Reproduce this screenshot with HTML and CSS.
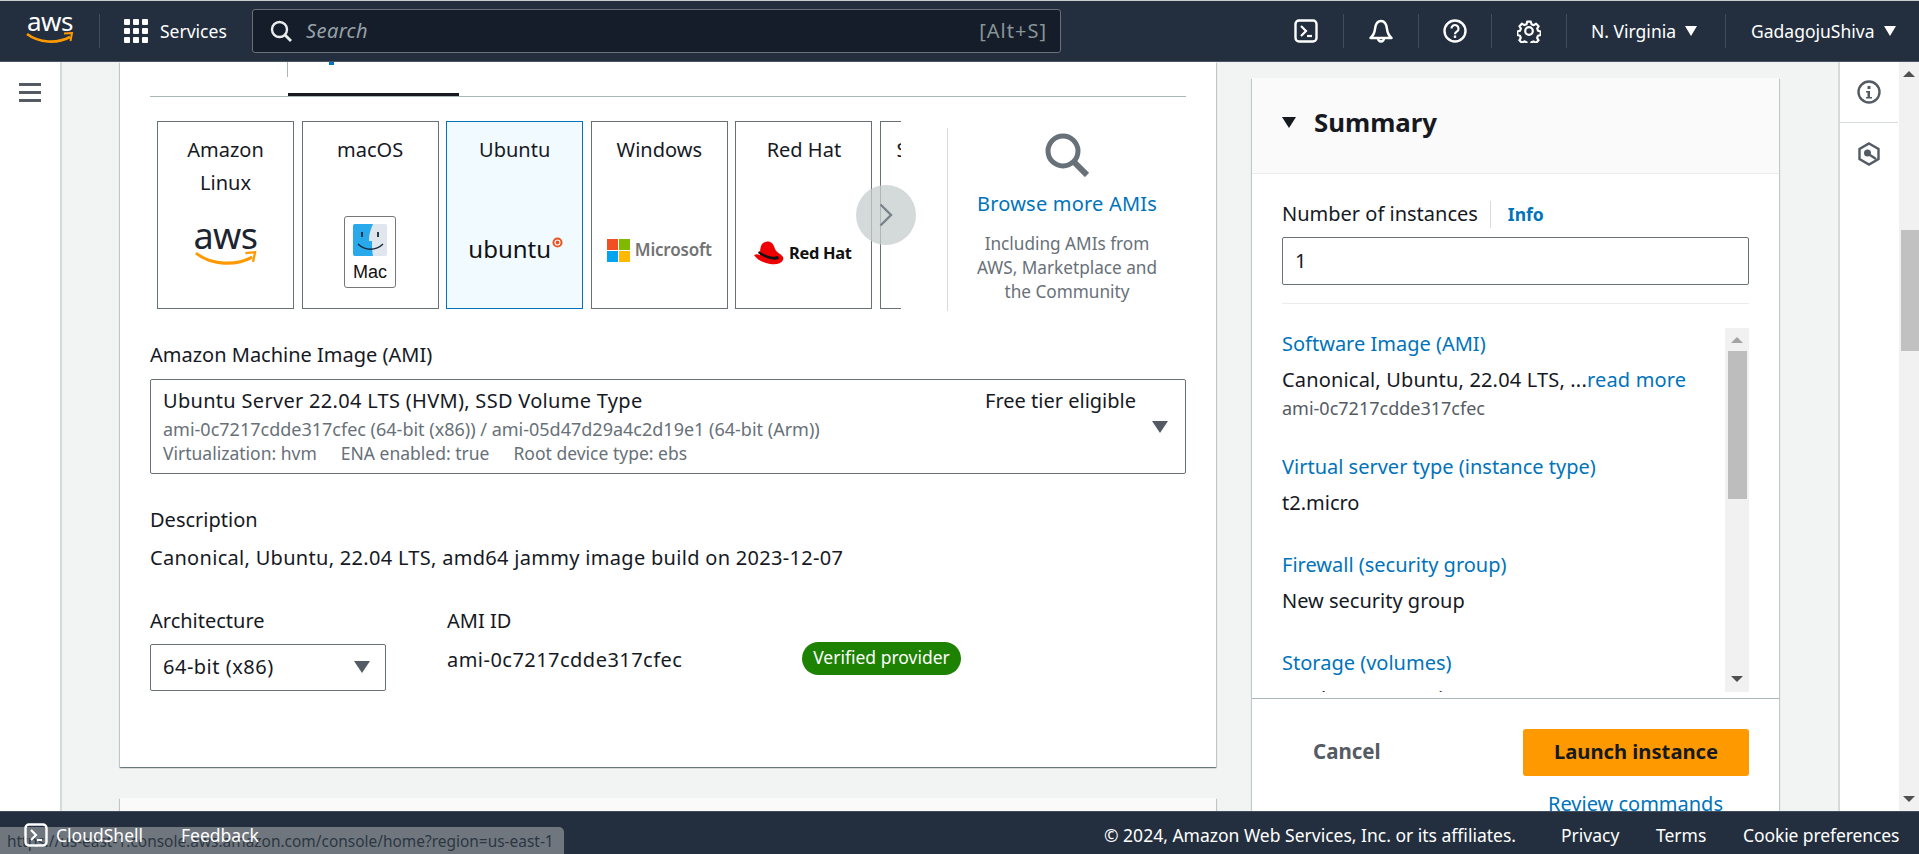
FILE: index.html
```html
<!DOCTYPE html>
<html lang="en">
<head>
<meta charset="utf-8">
<title>Launch an instance</title>
<link rel="stylesheet" href="styles.css">
</head>
<body>
<header class="topbar">
  <div class="aws-logo">
    <span class="aws-word">aws</span>
    <svg class="aws-smile" viewBox="0 0 48 14"><path d="M1 2c12 9 30 10 43 3" fill="none" stroke="#f90" stroke-width="2.6"/><path d="M38 1.500l8-.5-1.500 8" fill="none" stroke="#f90" stroke-width="2"/></svg>
  </div>
  <span class="nav-sep sep-logo"></span>
  <svg class="grid-icon" viewBox="0 0 24 24"><g fill="#fff"><rect x="0" y="0" width="6" height="6" rx="1"/><rect x="9" y="0" width="6" height="6" rx="1"/><rect x="18" y="0" width="6" height="6" rx="1"/><rect x="0" y="9" width="6" height="6" rx="1"/><rect x="9" y="9" width="6" height="6" rx="1"/><rect x="18" y="9" width="6" height="6" rx="1"/><rect x="0" y="18" width="6" height="6" rx="1"/><rect x="9" y="18" width="6" height="6" rx="1"/><rect x="18" y="18" width="6" height="6" rx="1"/></g></svg>
  <span class="services">Services</span>
  <div class="searchbox">
    <svg class="search-icon" viewBox="0 0 22 22"><circle cx="9.500" cy="9.500" r="7.500" fill="none" stroke="#eaeded" stroke-width="2.400"/><path d="M15 15l6 6" stroke="#eaeded" stroke-width="2.800"/></svg>
    <span class="search-ph">Search</span>
    <span class="search-key">[Alt+S]</span>
  </div>
  <div class="nav-right">
    <svg class="nav-icon" viewBox="0 0 24 24"><rect x="1.500" y="1.500" width="21" height="21" rx="3.500" fill="none" stroke="#fff" stroke-width="2.400"/><path d="M7 7l5 5-5 5" fill="none" stroke="#fff" stroke-width="2.200"/><path d="M13 17h5" stroke="#fff" stroke-width="2.200"/></svg>
    <span class="nav-sep sep-a"></span>
    <svg class="nav-icon" viewBox="0 0 24 24"><path d="M1.500 19c3-2.500 4-4.500 4.500-9C6.500 5.500 8.500 2 12 2s5.500 3.500 6 8c.5 4.500 1.500 6.500 4.500 9z" fill="none" stroke="#fff" stroke-width="2.400" stroke-linejoin="round"/><path d="M9 19.500a3 3 0 0 0 6 0" fill="none" stroke="#fff" stroke-width="2.400"/></svg>
    <span class="nav-sep sep-b"></span>
    <svg class="nav-icon" viewBox="0 0 24 24"><circle cx="12" cy="12" r="10.500" fill="none" stroke="#fff" stroke-width="2.400"/><path d="M8.500 9.500a3.500 3.500 0 1 1 5.500 2.900c-1.300.8-2 1.400-2 2.900" fill="none" stroke="#fff" stroke-width="2.200"/><rect x="10.800" y="16.500" width="2.400" height="2.400" fill="#fff"/></svg>
    <span class="nav-sep sep-c"></span>
    <svg class="nav-icon" viewBox="0 0 24 24"><path d="M10 1.500h4l.8 3 2.400 1 2.700-1.600 2.800 2.800-1.600 2.700 1 2.400 2.900.7v4l-3 .8-1 2.400 1.600 2.700-2.800 2.800-2.700-1.600-2.400 1-.7 2.900h-4l-.8-3-2.400-1-2.700 1.600-2.800-2.800 1.600-2.700-1-2.400-2.900-.7v-4l3-.8 1-2.400-1.600-2.700 2.800-2.800 2.700 1.600 2.400-1z" transform="translate(1.200 1.200) scale(.9)" fill="none" stroke="#fff" stroke-width="2.400" stroke-linejoin="round"/><circle cx="12" cy="12" r="3.800" fill="none" stroke="#fff" stroke-width="2.200"/></svg>
    <span class="nav-sep sep-d"></span>
    <span class="nav-text region">N. Virginia</span>
    <span class="nav-caret"></span>
    <span class="nav-sep sep-e"></span>
    <span class="nav-text user">GadagojuShiva</span>
    <span class="nav-caret"></span>
  </div>
</header>

<div class="middle">
  <aside class="sidenav">
    <div class="hamburger"><span></span><span></span><span></span></div>
  </aside>

  <main class="content">
    <div class="left-col">
      <section class="card">
        <div class="tabs">
          <div class="tab-first"></div>
          <div class="tab-active"><span class="tab-frag"></span></div>
        </div>

        <div class="quick-row">
          <div class="carousel">
            <div class="os-list">
              <div class="os-card">
                <div class="os-title">Amazon<br>Linux</div>
                <div class="os-logo">
                  <div class="logo-aws">
                    <span class="logo-aws-word">aws</span>
                    <svg class="logo-aws-smile" viewBox="0 0 64 16"><path d="M1 3c16 13 42 13 58 4" fill="none" stroke="#f90" stroke-width="3.200"/><path d="M52 3l10-1-2 10" fill="none" stroke="#f90" stroke-width="2.400"/></svg>
                  </div>
                </div>
              </div>
              <div class="os-card">
                <div class="os-title">macOS</div>
                <div class="os-logo">
                  <div class="logo-mac">
                    <svg class="finder" viewBox="0 0 34 32"><rect width="34" height="32" rx="2" fill="#dfe6ee"/><path d="M2 0h18c-3 7-4 11-4 17h3c0 5 0 10 1 15H2a2 2 0 0 1-2-2V2a2 2 0 0 1 2-2z" fill="#27a9ec"/><path d="M9 8v5M25 8v5" stroke="#1b2a3a" stroke-width="1.800"/><path d="M5 20c7 7 18 7 25 0" fill="none" stroke="#1b2a3a" stroke-width="1.400"/></svg>
                    <span class="mac-word">Mac</span>
                  </div>
                </div>
              </div>
              <div class="os-card os-selected">
                <div class="os-title">Ubuntu</div>
                <div class="os-logo">
                  <div class="logo-ubuntu">
                    <span class="ubuntu-word">ubuntu</span>
                    <svg class="ubuntu-mark" viewBox="0 0 12 12"><circle cx="6" cy="6" r="5.500" fill="#e95420"/><circle cx="6" cy="6" r="2.700" fill="none" stroke="#fff" stroke-width="1.300"/></svg>
                  </div>
                </div>
              </div>
              <div class="os-card">
                <div class="os-title">Windows</div>
                <div class="os-logo">
                  <div class="logo-ms">
                    <svg class="ms-mark" viewBox="0 0 23 23"><rect width="11" height="11" fill="#f25022"/><rect x="12" width="11" height="11" fill="#7fba00"/><rect y="12" width="11" height="11" fill="#00a4ef"/><rect x="12" y="12" width="11" height="11" fill="#ffb900"/></svg>
                    <span class="ms-word">Microsoft</span>
                  </div>
                </div>
              </div>
              <div class="os-card">
                <div class="os-title">Red Hat</div>
                <div class="os-logo">
                  <div class="logo-rh">
                    <svg class="rh-mark" viewBox="0 0 31 24"><path d="M9 3c2-2 5-3 8-2 3 1 4 4 5 7 1 2 2 3 5 5 3 2 4 4 3 6-2 4-7 5-13 4-6-1-13-4-16-9 2-1 4-1 6 0 0-4 0-8 2-11z" fill="#e00"/><path d="M6 10c5 4 13 7 19 5l1 3c-6 2-15-1-21-6z" fill="#111"/></svg>
                    <span class="rh-word">Red Hat</span>
                  </div>
                </div>
              </div>
              <div class="os-card">
                <div class="os-title">SUSE Linux</div>
              </div>
            </div>
            <button class="carousel-next" aria-label="Next"><svg viewBox="0 0 14 24"><path d="M1.500 1.500L12 12 1.500 22.500" fill="none" stroke="#7a828a" stroke-width="2.400"/></svg></button>
          </div>
          <div class="browse">
            <svg class="browse-icon" viewBox="0 0 44 44"><circle cx="18" cy="18" r="15" fill="none" stroke="#687078" stroke-width="5"/><path d="M29 29l13 13" stroke="#687078" stroke-width="6"/></svg>
            <a class="browse-link">Browse more AMIs</a>
            <p class="browse-note">Including AMIs from<br>AWS, Marketplace and<br>the Community</p>
          </div>
        </div>

        <div class="field-label ami-label">Amazon Machine Image (AMI)</div>
        <div class="ami-select">
          <div class="ami-main">
            <div class="ami-name">Ubuntu Server 22.04 LTS (HVM), SSD Volume Type</div>
            <div class="ami-meta">ami-0c7217cdde317cfec (64-bit (x86)) / ami-05d47d29a4c2d19e1 (64-bit (Arm))</div>
            <div class="ami-meta ami-flags"><span>Virtualization: hvm</span><span>ENA enabled: true</span><span>Root device type: ebs</span></div>
          </div>
          <div class="ami-tier">Free tier eligible</div>
          <span class="caret-down"></span>
        </div>

        <div class="field-label desc-label">Description</div>
        <div class="desc-text">Canonical, Ubuntu, 22.04 LTS, amd64 jammy image build on 2023-12-07</div>

        <div class="arch-row">
          <div class="arch-col">
            <div class="field-label">Architecture</div>
            <div class="arch-select"><span class="arch-value">64-bit (x86)</span><span class="caret-down"></span></div>
          </div>
          <div class="ami-col">
            <div class="field-label">AMI ID</div>
            <div class="ami-id">ami-0c7217cdde317cfec</div>
          </div>
          <div class="badge-col"><span class="badge">Verified provider</span></div>
        </div>
      </section>
      <section class="card next-card"></section>
    </div>

    <aside class="summary">
      <div class="sum-head"><span class="sum-caret"></span><h2 class="sum-title">Summary</h2></div>
      <div class="sum-body">
        <div class="count-row"><span class="count-label">Number of instances</span><a class="info-link">Info</a></div>
        <div class="count-input">1</div>
        <div class="sum-divider"></div>
        <div class="sum-scroll">
          <div class="sum-list">
            <a class="sum-link">Software Image (AMI)</a>
            <div class="sum-value sum-canon">Canonical, Ubuntu, 22.04 LTS, ...<a class="read-more">read more</a></div>
            <div class="sum-sub">ami-0c7217cdde317cfec</div>
            <a class="sum-link">Virtual server type (instance type)</a>
            <div class="sum-value">t2.micro</div>
            <a class="sum-link">Firewall (security group)</a>
            <div class="sum-value">New security group</div>
            <a class="sum-link">Storage (volumes)</a>
            <div class="sum-value">1 volume(s) - 8 GiB</div>
          </div>
          <div class="sum-bar">
            <span class="bar-up"></span>
            <span class="bar-thumb"></span>
            <span class="bar-down"></span>
          </div>
        </div>
      </div>
      <div class="sum-foot">
        <div class="sum-actions">
          <a class="cancel">Cancel</a>
          <button class="launch">Launch instance</button>
        </div>
        <a class="review">Review commands</a>
      </div>
    </aside>
  </main>

  <aside class="rail">
    <div class="rail-slot">
      <svg class="rail-icon" viewBox="0 0 24 24"><circle cx="12" cy="12" r="10.500" fill="none" stroke="#545b64" stroke-width="2.400"/><rect x="10.500" y="6" width="3" height="3" fill="#545b64"/><path d="M9 11h4v6h2v1.500H9V17h1.500v-4.500H9z" fill="#545b64"/></svg>
    </div>
    <div class="rail-slot rail-second">
      <svg class="rail-icon" viewBox="0 0 24 24"><path d="M12 1.500l9.500 5.500v10L12 22.500 2.500 17V7z" fill="none" stroke="#545b64" stroke-width="2.400"/><circle cx="10.500" cy="11" r="3.500" fill="#545b64"/><path d="M13 13l6 4" stroke="#545b64" stroke-width="2.400"/></svg>
    </div>
  </aside>

  <div class="page-bar">
    <span class="page-up"></span>
    <span class="page-thumb"></span>
    <span class="page-down"></span>
  </div>
</div>

<footer class="footer">
  <div class="status-bubble">https://us-east-1.console.aws.amazon.com/console/home?region=us-east-1</div>
  <svg class="foot-icon" viewBox="0 0 24 24"><rect x="1.500" y="1.500" width="21" height="21" rx="3.500" fill="none" stroke="#fff" stroke-width="2.400"/><path d="M7 7l5 5-5 5" fill="none" stroke="#fff" stroke-width="2.200"/><path d="M13 17h5" stroke="#fff" stroke-width="2.200"/></svg>
  <span class="foot-item foot-shell">CloudShell</span>
  <span class="foot-item foot-feedback">Feedback</span>
  <span class="foot-item foot-copy">© 2024, Amazon Web Services, Inc. or its affiliates.</span>
  <span class="foot-item foot-privacy">Privacy</span>
  <span class="foot-item foot-terms">Terms</span>
  <span class="foot-item foot-cookie">Cookie preferences</span>
</footer>
</body>
</html>
```
FILE: styles.css
```css
* { box-sizing: border-box; }
html, body { height: 100%; }
body {
  margin: 0;
  display: flex;
  flex-direction: column;
  height: 854px;
  overflow: hidden;
  font-family: "Noto Sans", "Open Sans", sans-serif;
  font-size: 20px;
  line-height: 24px;
  color: #16191f;
  background: #f2f3f3;
}
p, h2 { margin: 0; }
a { color: #0073bb; }

/* Top bar */
.topbar {
  flex: 0 0 62px;
  display: flex;
  align-items: center;
  background: #232f3e;
  border-top: 1px solid #c9cbcd;
  border-bottom: 1px solid #4a5563;
  color: #fff;
}
.aws-logo {
  margin-left: 26px;
  width: 48px;
  display: flex;
  flex-direction: column;
  align-items: center;
}
.aws-word {
  font-size: 26px;
  line-height: 20px;
  height: 20px;
  letter-spacing: -.5px;
  margin-top: -6px;
}
.aws-smile { width: 48px; height: 14px; margin-top: 1px; }
.nav-sep { width: 1px; height: 34px; background: #414d5c; flex: none; }
.sep-logo { margin-left: 25px; }
.grid-icon { width: 24px; height: 24px; margin-left: 24px; }
.services { margin-left: 12px; font-size: 17.500px; width: 80px; }
.searchbox {
  margin-left: 12px;
  width: 809px;
  height: 44px;
  display: flex;
  align-items: center;
  background: #161d2a;
  border: 1px solid #687078;
  border-radius: 3px;
  padding: 0 13px 0 17px;
}
.search-icon { width: 22px; height: 22px; }
.search-ph { margin-left: 14px; font-style: italic; color: #95a1a6; flex: 1; letter-spacing: .4px; }
.search-key { color: #879596; letter-spacing: 1px; }
.nav-right { display: flex; align-items: center; margin-left: 233px; }
.nav-icon { width: 24px; height: 24px; flex: none; }
.sep-a { margin: 0 25px 0 25px; }
.sep-b { margin: 0 24px 0 25px; }
.sep-c { margin: 0 25px 0 24px; }
.sep-d { margin: 0 24px 0 25px; }
.sep-e { margin: 0 25px 0 28px; }
.nav-text { font-size: 17.500px; white-space: nowrap; }
.nav-caret {
  margin-left: 9px;
  width: 0; height: 0;
  border-left: 6px solid transparent;
  border-right: 6px solid transparent;
  border-top: 10px solid #fff;
}

/* Middle */
.middle { flex: 1; min-height: 0; display: flex; overflow: hidden; }
.sidenav {
  flex: 0 0 61px;
  background: #fff;
  border-right: 2px solid #d5dbdb;
  padding: 21px 19px;
}
.hamburger { display: flex; flex-direction: column; gap: 5px; width: 22px; }
.hamburger span { height: 3px; background: #545b64; }
.content { flex: 1; min-width: 0; display: flex; padding-left: 58px; overflow: hidden; }
.left-col { flex: 0 0 1096px; }
.card {
  background: #fff;
  box-shadow: 0 1px 1px 0 rgba(0,28,36,.4), 1px 1px 1px 0 rgba(0,28,36,.15), -1px 1px 1px 0 rgba(0,28,36,.15);
  padding: 0 30px 76px;
}
.next-card { margin-top: 31px; height: 60px; padding: 0; background: #fafafa; }

.tabs { height: 35px; display: flex; border-bottom: 1px solid #aab7b8; }
.tab-first { width: 138px; height: 15px; border-right: 1px solid #aab7b8; }
.tab-active { width: 171px; height: 34px; border-bottom: 3px solid #16191f; padding-left: 41px; }
.tab-frag { display: block; width: 5px; height: 3px; background: #0073bb; }

.quick-row { display: flex; margin-top: 24px; height: 191px; }
.carousel { position: relative; width: 751px; padding-left: 7px; }
.os-list { display: flex; gap: 7.600px; overflow: hidden; height: 188px; }
.os-card {
  flex: 0 0 137px;
  height: 188px;
  border: 1px solid #687078;
  display: flex;
  flex-direction: column;
  align-items: center;
}
.os-selected { background: #f1faff; border-color: #0073bb; }
.os-title {
  height: 76px;
  padding-top: 11px;
  line-height: 33px;
  text-align: center;
  white-space: nowrap;
}
.os-logo { height: 104px; display: flex; align-items: center; justify-content: center; }
.logo-aws { display: flex; flex-direction: column; align-items: center; width: 64px; }
.logo-aws-word { font-size: 36px; line-height: 24px; height: 24px; letter-spacing: -.5px; color: #1b2430; margin-top: -10px; }
.logo-aws-smile { width: 62px; height: 16px; margin-top: 2px; }
.logo-mac {
  width: 52px; height: 72px;
  margin-top: 4px;
  border: 1px solid #777;
  border-radius: 3px;
  display: flex; flex-direction: column; align-items: center;
  padding-top: 7px;
  background: #fff;
}
.finder { width: 34px; height: 32px; }
.mac-word { font-family: "Liberation Sans", sans-serif; font-size: 18px; line-height: 22px; margin-top: 5px; color: #111; }
.logo-ubuntu { display: flex; align-items: flex-start; margin-top: -2px; margin-left: 2px; }
.ubuntu-word { font-size: 24px; line-height: 30px; color: #111; }
.ubuntu-mark { width: 11px; height: 11px; margin-left: 1px; margin-top: 3px; }
.logo-ms { display: flex; align-items: center; gap: 5px; }
.ms-mark { width: 23px; height: 23px; }
.ms-word { font-weight: 600; font-size: 17px; line-height: 24px; color: #737373; letter-spacing: -.2px; }
.logo-rh { display: flex; align-items: center; gap: 5px; margin-top: 6px; margin-left: -3px; }
.rh-mark { width: 31px; height: 24px; }
.rh-word { font-weight: 700; font-size: 16.400px; color: #111; letter-spacing: -.3px; white-space: nowrap; }
.carousel-next {
  position: absolute;
  left: 706px;
  top: 64px;
  width: 60px; height: 60px;
  padding: 0;
  border: 0;
  border-radius: 50%;
  background: rgba(197,206,206,.75);
  display: flex; align-items: center; justify-content: center;
}
.carousel-next svg { width: 14px; height: 24px; }
.browse {
  margin-left: 46px;
  margin-top: 7px;
  width: 239px;
  height: 183px;
  border-left: 1px solid #d5dbdb;
  display: flex; flex-direction: column; align-items: center;
}
.browse-icon { width: 44px; height: 44px; margin-top: 5px; }
.browse-link { margin-top: 15px; white-space: nowrap; letter-spacing: .2px; }
.browse-note { margin-top: 16px; text-align: center; color: #687078; font-size: 17.200px; }

.field-label { line-height: 24px; }
.ami-label { margin-top: 31px; }
.ami-select {
  margin-top: 12px;
  height: 95px;
  border: 1px solid #687078;
  border-radius: 2px;
  padding: 9px 17px 0 12px;
  display: flex;
}
.ami-main { flex: 1; }
.ami-name { margin-bottom: 4px; letter-spacing: .3px; }
.ami-meta { font-size: 18px; color: #687078; white-space: nowrap; }
.ami-flags { display: flex; gap: 24px; font-size: 17.500px; }
.ami-tier { white-space: nowrap; margin-right: 16px; }
.caret-down {
  display: block;
  flex: none;
  width: 0; height: 0;
  border-left: 8px solid transparent;
  border-right: 8px solid transparent;
  border-top: 12px solid #545b64;
}
.ami-select .caret-down { margin-top: 32px; }
.desc-label { margin-top: 34px; }
.desc-text { margin-top: 14px; letter-spacing: .3px; white-space: nowrap; }
.arch-row { display: flex; margin-top: 39px; }
.arch-col { flex: 0 0 297px; }
.arch-select {
  margin-top: 11px;
  width: 236px; height: 47px;
  border: 1px solid #687078;
  border-radius: 2px;
  padding: 0 15px 2px 12px;
  display: flex; align-items: center; justify-content: space-between;
}
.arch-value { letter-spacing: .5px; }
.ami-col { flex: 0 0 355px; }
.ami-id { margin-top: 15px; letter-spacing: .47px; }
.badge-col { padding-top: 33px; }
.badge {
  display: block;
  width: 159px; height: 33px;
  border-radius: 17px;
  background: #1d8102;
  color: #fff;
  font-size: 17.500px;
  line-height: 31px;
  text-align: center;
  white-space: nowrap;
}

/* Summary */
.summary {
  flex: 0 0 527px;
  margin: 16px 0 0 36px;
  height: 760px;
  background: #fff;
  box-shadow: 0 1px 1px 0 rgba(0,28,36,.3), 1px 1px 1px 0 rgba(0,28,36,.15), -1px 1px 1px 0 rgba(0,28,36,.15);
  display: flex; flex-direction: column;
}
.sum-head {
  flex: 0 0 96px;
  background: #fafafa;
  border-bottom: 1px solid #eaeded;
  display: flex; align-items: center;
  padding: 0 0 7px 30px;
}
.sum-caret {
  width: 0; height: 0;
  border-left: 7.500px solid transparent;
  border-right: 7.500px solid transparent;
  border-top: 11px solid #16191f;
}
.sum-title { margin-left: 18px; font-size: 25.800px; line-height: 32px; font-weight: 700; }
.sum-body { padding: 26px 30px 6px; border-bottom: 1px solid #aab7b8; }
.count-row { display: flex; align-items: center; height: 28px; }
.count-label { padding-right: 12px; border-right: 1px solid #d5dbdb; line-height: 26px; height: 27px; white-space: nowrap; }
.info-link { margin-left: 17px; font-weight: 700; font-size: 17.500px; }
.count-input {
  margin-top: 9px;
  height: 48px;
  border: 1px solid #687078;
  border-radius: 2px;
  padding-left: 12px;
  line-height: 46px;
}
.sum-divider { margin-top: 18px; height: 1px; background: #eaeded; }
.sum-scroll { margin-top: 24px; height: 364px; display: flex; overflow: hidden; }
.sum-list { flex: 1; padding-top: 4px; min-width: 0; }
.sum-link { display: block; margin-top: 38px; white-space: nowrap; }
.sum-link:first-child { margin-top: 0; }
.sum-value { margin-top: 12px; white-space: nowrap; }
.sum-canon { letter-spacing: .17px; }
.read-more { color: #0073bb; }
.sum-sub { margin-top: 4px; margin-bottom: -3px; font-size: 18px; color: #545b64; }
.sum-bar {
  flex: 0 0 24px;
  background: #f1f1f1;
  display: flex; flex-direction: column; align-items: center;
}
.bar-up {
  margin-top: 9px;
  width: 0; height: 0;
  border-left: 6px solid transparent;
  border-right: 6px solid transparent;
  border-bottom: 6px solid #a3a3a3;
}
.bar-thumb { margin-top: 8px; width: 19px; height: 148px; background: #bdbdbd; }
.bar-down {
  margin-top: auto;
  margin-bottom: 10px;
  width: 0; height: 0;
  border-left: 6px solid transparent;
  border-right: 6px solid transparent;
  border-top: 6px solid #505050;
}
.sum-foot { padding: 30px 30px 0; }
.sum-actions { display: flex; justify-content: space-between; align-items: center; padding-left: 31px; }
.cancel { font-weight: 700; font-size: 20.500px; color: #545b64; margin-top: -3px; }
.launch {
  width: 226px; height: 47px;
  padding: 0 0 3px;
  border: 0;
  border-radius: 3px;
  background: #f90;
  color: #16191f;
  font: 700 20.200px/24px "Noto Sans", sans-serif;
}
.review { display: block; margin-top: 16px; padding-left: 266px; white-space: nowrap; }

/* Right rail */
.rail { flex: 0 0 61px; background: #fff; border-left: 2px solid #d5dbdb; padding-right: 1px; }
.rail-slot { height: 61px; display: flex; justify-content: center; padding-top: 18px; border-bottom: 1px solid #d5dbdb; }
.rail-second { border-bottom: 0; padding-top: 19px; }
.rail-icon { width: 24px; height: 24px; }
.page-bar { flex: 0 0 20px; background: #f1f1f1; display: flex; flex-direction: column; align-items: center; }
.page-up {
  margin-top: 9px;
  width: 0; height: 0;
  border-left: 6px solid transparent;
  border-right: 6px solid transparent;
  border-bottom: 6px solid #505050;
}
.page-thumb { margin-top: 153px; margin-left: 2px; width: 18px; height: 121px; background: #c1c1c1; }
.page-down {
  margin-top: auto;
  margin-bottom: 9px;
  width: 0; height: 0;
  border-left: 6px solid transparent;
  border-right: 6px solid transparent;
  border-top: 6px solid #505050;
}

/* Footer */
.footer {
  flex: 0 0 43px;
  position: relative;
  display: flex;
  align-items: center;
  padding-top: 3px;
  background: #232f3e;
  border-top: 1px solid #414d5c;
  color: #fff;
}
.status-bubble {
  position: absolute;
  left: 0; bottom: 0;
  width: 564px; height: 27px;
  background: #6f767e;
  border-top-right-radius: 5px;
  padding-left: 7px;
  color: #2c3742;
  font-size: 15.450px;
  line-height: 29px;
  white-space: nowrap;
}
.foot-icon { position: relative; width: 24px; height: 24px; margin-left: 24px; }
.foot-item { position: relative; font-size: 17.500px; white-space: nowrap; }
.foot-shell { margin-left: 8px; width: 125px; }
.foot-feedback { width: 923px; }
.foot-copy { width: 457px; }
.foot-privacy { width: 95px; }
.foot-terms { width: 87px; }
.foot-cookie { letter-spacing: -.1px; }
```
